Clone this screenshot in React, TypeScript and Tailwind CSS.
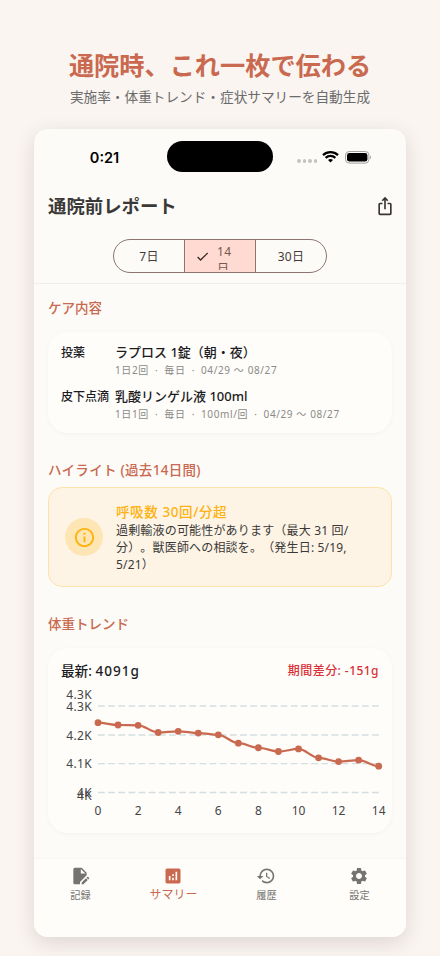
import { Fragment, ReactNode } from "react";
import { IconType } from "react-icons";
import {
  MdAnalytics,
  MdCheck,
  MdEditDocument,
  MdHistory,
  MdIosShare,
  MdOutlineInfo,
  MdSettings,
} from "react-icons/md";

interface CareItem {
  kind: string;
  name: string;
  details: string[];
}

const careItems: CareItem[] = [
  { kind: "投薬", name: "ラプロス 1錠（朝・夜）", details: ["1日2回", "毎日", "04/29 〜 08/27"] },
  { kind: "皮下点滴", name: "乳酸リンゲル液 100ml", details: ["1日1回", "毎日", "100ml/回", "04/29 〜 08/27"] },
];

const weights = [4242, 4234, 4233, 4208, 4212, 4206, 4200, 4171, 4155, 4142, 4151, 4120, 4107, 4112, 4091];

function StatusBar() {
  return (
    <div className="flex h-[58px] items-center">
      <div className="w-[133px] pl-2 text-center font-['Inter','Noto_Sans_CJK_JP',sans-serif] text-[14.5px] leading-none font-semibold text-black">
        0:21
      </div>
      <div className="mb-[3px] h-[31px] w-[106px] rounded-full bg-black" />
      <div className="mb-[2px] ml-[24px] flex items-center">
        <div className="mt-[8px] flex gap-[2px]">
          {[0, 1, 2, 3].map((i) => (
            <span key={i} className="size-[3.5px] rounded-full bg-[#c4c3c1]" />
          ))}
        </div>
        <svg className="ml-[5px]" width="17" height="12" viewBox="0 0 17 12" fill="none" stroke="black">
          <path d="M1 4.1C5.2 .2 11.8 .2 16 4.1" strokeWidth="2.2" />
          <path d="M3.6 6.9C6.4 4.3 10.6 4.3 13.4 6.9" strokeWidth="2.2" />
          <path d="M6 9C7.4 7.8 9.6 7.8 11 9L8.5 11.6Z" fill="black" stroke="none" />
        </svg>
        <svg className="ml-[6px]" width="27" height="13" viewBox="0 0 27 13">
          <rect x=".5" y=".5" width="23.4" height="11.6" rx="3.6" fill="none" stroke="#a3a29f" />
          <rect x="2" y="2" width="20.4" height="8.6" rx="2.4" fill="black" />
          <path d="M25 4.4C26.3 4.9 26.3 7.7 25 8.2Z" fill="#a3a29f" />
        </svg>
      </div>
    </div>
  );
}

function PeriodSelector() {
  return (
    <div className="mx-auto flex h-[34px] w-[214px] overflow-hidden rounded-full border border-[#8d7470] text-[12px] leading-[17px] tracking-[0.3px] text-[#453a38]">
      <div className="flex flex-1 items-center justify-center">7日</div>
      <div className="flex w-[72px] items-start border-x border-[#8d7470] bg-[#ffdad2] text-[#77574f]">
        <MdCheck className="mt-[9px] ml-[10px] size-[15px] text-[#3b2d2a]" />
        <span className="mt-[3px] ml-[7px] h-[27px] w-[16px] overflow-hidden break-all">14日</span>
      </div>
      <div className="flex flex-1 items-center justify-center">30日</div>
    </div>
  );
}

function SectionTitle({ children }: { children: ReactNode }) {
  return <h2 className="text-[13.5px] leading-5 font-medium text-[#c9694f]">{children}</h2>;
}

function WeightChart() {
  const px = (i: number) => 37 + i * 20.05;
  const py = (g: number) => 20 + ((4300 - g) * 86.4) / 300;

  // smooth the line between neighbouring points
  const path = weights
    .map((g, i) => {
      if (i === 0) return `M${px(0)} ${py(g)}`;
      return `C${px(i - 1) + 7} ${py(weights[i - 1])} ${px(i) - 7} ${py(g)} ${px(i)} ${py(g)}`;
    })
    .join("");

  return (
    <svg width="331" height="138" viewBox="0 0 331 138" className="block text-[12px]" fill="#454448">
      {[20, 49, 77.7, 106.5].map((y) => (
        <line key={y} x1="37" x2="318" y1={y} y2={y} stroke="#d5dee2" strokeWidth="1.3" strokeDasharray="6.8 3.35" />
      ))}
      <g textAnchor="end" className="tracking-[0.4px]">
        <text x="31.2" y="12.6">4.3K</text>
        <text x="31.2" y="24.6">4.3K</text>
        <text x="31.2" y="53.6">4.2K</text>
        <text x="31.2" y="82.4">4.1K</text>
        <text x="31.2" y="111.4">4K</text>
        <text x="31.2" y="113.6">4K</text>
      </g>
      <g textAnchor="middle">
        {[0, 2, 4, 6, 8, 10, 12, 14].map((d) => (
          <text key={d} x={px(d)} y="129.4">{d}</text>
        ))}
      </g>
      <path d={path} fill="none" stroke="#c9694f" strokeWidth="2.2" />
      {weights.map((g, i) => (
        <circle key={i} cx={px(i)} cy={py(g)} r="3.4" fill="#c9694f" />
      ))}
    </svg>
  );
}

function Tab({ icon: Icon, label, active }: { icon: IconType; label: string; active?: boolean }) {
  return (
    <div className={active ? "flex flex-1 flex-col items-center text-[#c9694f]" : "flex flex-1 flex-col items-center text-[#757472]"}>
      <Icon className="mt-[7px] mr-px size-5" />
      <span className={active ? "text-[12px] leading-[17px]" : "mt-[1px] text-[10.2px] leading-[17px]"}>{label}</span>
    </div>
  );
}

export default function App() {
  return (
    <div className="flex h-[956px] w-[440px] flex-col items-center bg-[#faf5f1] font-['Noto_Sans','Noto_Sans_CJK_JP',sans-serif] [text-spacing-trim:space-all]">
      <h1 className="mt-[46px] h-[38px] text-[25.2px] leading-[38px] font-bold whitespace-nowrap text-[#c9694f]">
        通院時、これ一枚で伝わる
      </h1>
      <p className="mt-[3px] h-5 text-[13.65px] leading-5 whitespace-nowrap text-[#6b6b6b]">
        実施率・体重トレンド・症状サマリーを自動生成
      </p>

      <div className="mt-[22px] flex h-[808px] w-[372px] flex-col overflow-hidden rounded-[14px] bg-[#fcfbf8] shadow-[0_6px_20px_rgba(80,50,40,0.16)]">
        <StatusBar />
        <div className="flex h-[38px] items-center justify-between pr-[11px] pl-[14px]">
          <span className="pt-px text-[18.4px] leading-none font-bold text-[#3a3937]">通院前レポート</span>
          <MdIosShare className="size-[20px] text-[#3a3534]" />
        </div>
        <div className="h-[59px] border-b border-[#efeeeb] pt-[14px]">
          <PeriodSelector />
        </div>

        <div className="flex flex-1 flex-col px-[14px]">
          <div className="mt-[14px]">
            <SectionTitle>ケア内容</SectionTitle>
          </div>
          <div className="mt-[14px] h-[101px] rounded-[20px] bg-[#fefdf9] px-[13px] pt-[11px] shadow-[0_1px_4px_rgba(0,0,0,0.04)]">
            {careItems.map((item) => (
              <div key={item.kind} className="flex h-[44px] whitespace-nowrap">
                <span className="w-[54px] pt-px text-[12px] leading-[18px] font-medium text-[#1c1b1f]">{item.kind}</span>
                <div>
                  <p className="text-[13px] leading-[18px] font-medium text-[#1c1b1f]">{item.name}</p>
                  <p className="text-[10px] leading-[18px] tracking-[0.6px] text-[#8b8a88]">
                    {item.details.map((d, i) => (
                      <Fragment key={i}>
                        {i > 0 && <span className="inline-block w-[15.5px] text-center">·</span>}
                        {d}
                      </Fragment>
                    ))}
                  </p>
                </div>
              </div>
            ))}
          </div>

          <div className="mt-[27px] tracking-[0.3px]">
            <SectionTitle>ハイライト (過去14日間)</SectionTitle>
          </div>
          <div className="mt-[7px] flex h-[100px] items-center rounded-[14px] border border-[#fde3ab] bg-[#fdf4e6] pl-4">
            <div className="flex size-[38px] items-center justify-center rounded-full bg-[#fde6b3]">
              <MdOutlineInfo className="size-[23px] text-[#fdb20f]" />
            </div>
            <div className="mt-[2px] ml-[13px] whitespace-nowrap">
              <p className="text-[13.5px] leading-[19px] font-medium tracking-[0.6px] text-[#fdb20f]">呼吸数 30回/分超</p>
              <p className="text-[12px] leading-[17px] tracking-[0.18px] text-[#3a3937]">
                過剰輸液の可能性があります（最大 31 回/
                <br />
                分）。獣医師への相談を。（発生日: 5/19,
                <br />
                5/21）
              </p>
            </div>
          </div>

          <div className="mt-[27px]">
            <SectionTitle>体重トレンド</SectionTitle>
          </div>
          <div className="mt-[14px] h-[185px] rounded-[20px] bg-[#fefdf9] pt-[13px] pl-[13px] shadow-[0_1px_4px_rgba(0,0,0,0.04)]">
            <div className="flex h-[20px] items-center justify-between pr-[13px] leading-5 font-medium">
              <span className="text-[13.6px] text-[#1c1b1f]">
                最新: <span className="tracking-[1px]">4091g</span>
              </span>
              <span className="text-[12px] tracking-[0.45px] text-[#d92f38]">期間差分: -151g</span>
            </div>
            <div className="mt-[5px]">
              <WeightChart />
            </div>
          </div>
        </div>

        <div className="flex h-[79px] border-t border-[#f7f6f3] bg-[#fefdf9]">
          <Tab icon={MdEditDocument} label="記録" />
          <Tab icon={MdAnalytics} label="サマリー" active />
          <Tab icon={MdHistory} label="履歴" />
          <Tab icon={MdSettings} label="設定" />
        </div>
      </div>
    </div>
  );
}
